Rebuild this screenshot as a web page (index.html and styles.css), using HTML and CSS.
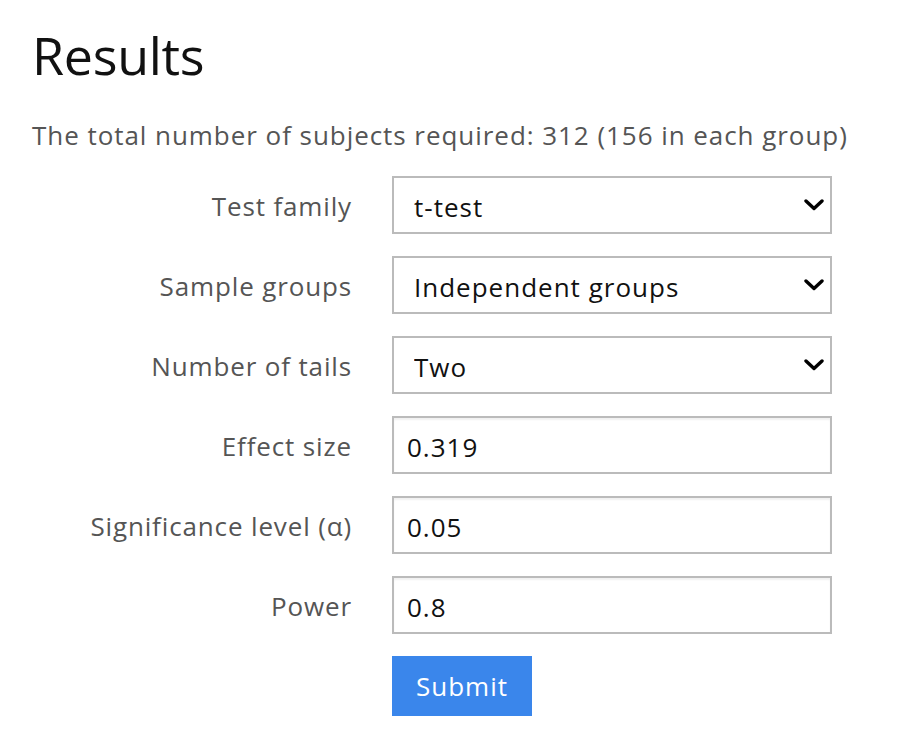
FILE: index.html
```html
<!DOCTYPE html>
<html lang="en">
<head>
<meta charset="utf-8">
<title>Results</title>
<link rel="stylesheet" href="styles.css">
</head>
<body>
<main class="page">
  <h1 class="title">Results</h1>
  <p class="summary">The total number of subjects required: 312 (156 in each group)</p>
  <form class="form">
    <label class="label" for="family">Test family</label>
    <div class="select-wrap">
      <select id="family" class="control select"><option>t-test</option></select>
      <svg class="chev" viewBox="0 0 20 12" width="20" height="12"><path d="M2 2 L10 9.5 L18 2" fill="none" stroke="#000" stroke-width="3.4" stroke-linecap="round" stroke-linejoin="round"/></svg>
    </div>
    <label class="label" for="groups">Sample groups</label>
    <div class="select-wrap">
      <select id="groups" class="control select"><option>Independent groups</option></select>
      <svg class="chev" viewBox="0 0 20 12" width="20" height="12"><path d="M2 2 L10 9.5 L18 2" fill="none" stroke="#000" stroke-width="3.4" stroke-linecap="round" stroke-linejoin="round"/></svg>
    </div>
    <label class="label" for="tails">Number of tails</label>
    <div class="select-wrap">
      <select id="tails" class="control select"><option>Two</option></select>
      <svg class="chev" viewBox="0 0 20 12" width="20" height="12"><path d="M2 2 L10 9.5 L18 2" fill="none" stroke="#000" stroke-width="3.4" stroke-linecap="round" stroke-linejoin="round"/></svg>
    </div>
    <label class="label" for="effect">Effect size</label>
    <input id="effect" class="control input" type="text" value="0.319">
    <label class="label" for="alpha">Significance level (α)</label>
    <input id="alpha" class="control input" type="text" value="0.05">
    <label class="label" for="power">Power</label>
    <input id="power" class="control input" type="text" value="0.8">
    <span class="spacer"></span>
    <div class="actions"><button type="button" class="submit">Submit</button></div>
  </form>
</main>
</body>
</html>
```
FILE: styles.css
```css
html, body {
  margin: 0;
  padding: 0;
  background: #fff;
}
body {
  font-family: "Open Sans", "Noto Sans", sans-serif;
  color: #555;
}
.page {
  padding: 15px 32px 0 32px;
}
.title {
  margin: 0;
  font-size: 52px;
  font-weight: 400;
  line-height: 80px;
  letter-spacing: -0.3px;
  color: #111;
}
.summary {
  margin: 20px 0 0 0;
  font-size: 26px;
  line-height: 40px;
  letter-spacing: 0.95px;
  color: #555;
}
.form {
  display: grid;
  grid-template-columns: 320px 440px;
  column-gap: 40px;
  row-gap: 22px;
  margin-top: 21px;
  align-items: center;
}
.label {
  justify-self: end;
  font-size: 26px;
  line-height: 56px;
  padding-top: 2px;
  letter-spacing: 0.86px;
  color: #555;
  white-space: nowrap;
}
.select-wrap {
  position: relative;
  height: 58px;
}
.control {
  box-sizing: border-box;
  width: 440px;
  height: 58px;
  border: 2px solid #bbb;
  border-radius: 0;
  background: #fff;
  font-family: "Open Sans", "Noto Sans", sans-serif;
  font-size: 26px;
  letter-spacing: 1px;
  color: #111;
  margin: 0;
  outline: none;
}
.select {
  appearance: none;
  -webkit-appearance: none;
  padding: 3px 0 0 20px;
}
.input {
  padding: 3px 0 0 13px;
  box-shadow: inset 0 2px 2px rgba(0,0,0,0.06);
}
.chev {
  position: absolute;
  right: 8px;
  top: 23px;
  pointer-events: none;
}
.actions {
  margin-top: 0;
}
.submit {
  width: 140px;
  height: 60px;
  border: none;
  border-radius: 0;
  background: #3a86eb;
  color: #fff;
  font-family: "Open Sans", "Noto Sans", sans-serif;
  font-size: 26px;
  letter-spacing: 1px;
  padding: 0;
  cursor: pointer;
}
```
